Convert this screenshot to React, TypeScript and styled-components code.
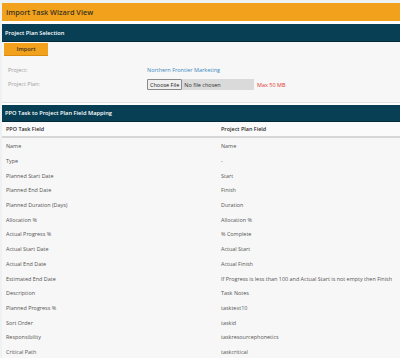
import React from "react";
import styled, { createGlobalStyle } from "styled-components";

const Global = createGlobalStyle`
  html, body { margin: 0; padding: 0; background: #ffffff; }
  body { font-family: "Open Sans", "Noto Sans", sans-serif; }
  * { box-sizing: border-box; }
`;

const Page = styled.div`
  padding: 3px 0 0 2px;
  background: #eef2f2;
  width: 400px;
  height: 358px;
  overflow: hidden;
`;

const Inner = styled.div`
  background: #ffffff;
  display: flex;
  flex-direction: column;
`;

const TitleBar = styled.div`
  height: 18px;
  background: #f2a11c;
  display: flex;
  align-items: center;
  padding-left: 4px;
  font-size: 7.3px;
  font-weight: 600;
  color: #3b3320;
  margin-bottom: 3px;
`;

const Panel = styled.section<{ $gap?: number }>`
  background: #f7f7f7;
  border-bottom: 1px solid #e2e2e2;
  margin-bottom: ${(p) => p.$gap ?? 0}px;
`;

const PanelHeader = styled.div<{ $h: number }>`
  height: ${(p) => p.$h}px;
  background: #083f55;
  border-bottom: 1px solid #052a3a;
  display: flex;
  align-items: center;
  padding-left: 3px;
  font-size: 5.7px;
  font-weight: 600;
  color: #ffffff;
`;

const PanelBody = styled.div`
  padding: 1px 0 12px 2px;
  display: flex;
  flex-direction: column;
`;

const ImportButton = styled.button`
  width: 44px;
  height: 13px;
  background: #f2a11c;
  border: none;
  border-bottom: 1px solid #d98c10;
  font-family: inherit;
  font-size: 5.8px;
  font-weight: 600;
  color: #3b3320;
  padding: 0;
  margin-bottom: 9px;
`;

const FormGrid = styled.div`
  display: grid;
  grid-template-columns: 139px 1fr;
  row-gap: 3px;
  align-items: center;
  padding-left: 4px;
`;

const Label = styled.div`
  font-size: 5.5px;
  color: #a0a0a0;
  height: 11px;
  line-height: 11px;
`;

const LinkValue = styled.a`
  font-size: 5.5px;
  color: #3a87c0;
  text-decoration: none;
  line-height: 11px;
`;

const FileRow = styled.div`
  display: flex;
  align-items: center;
  gap: 3px;
`;

const FileBox = styled.div`
  width: 107px;
  height: 11px;
  background: #dadada;
  display: flex;
  align-items: center;
`;

const ChooseBtn = styled.span`
  height: 11px;
  border: 1px solid #8a8a8a;
  background: #efefef;
  font-size: 5.5px;
  color: #222;
  display: flex;
  align-items: center;
  padding: 0 2px;
  border-radius: 1px;
`;

const NoFile = styled.span`
  font-size: 5.5px;
  color: #333;
  padding-left: 2px;
`;

const MaxSize = styled.span`
  font-size: 5.5px;
  color: #e0362f;
`;

const Table = styled.div`
  display: flex;
  flex-direction: column;
`;

const Row = styled.div<{ $head?: boolean }>`
  display: grid;
  grid-template-columns: 215px 1fr;
  height: ${(p) => (p.$head ? 16 : 14.7)}px;
  align-items: center;
  padding-left: 4px;
  font-size: 5.45px;
  color: ${(p) => (p.$head ? "#2a2a2a" : "#555")};
  font-weight: ${(p) => (p.$head ? 600 : 400)};
  background: ${(p) => (p.$head ? "#fafafa" : "transparent")};
  border-bottom: ${(p) => (p.$head ? "2px solid #d6d6d6" : "none")};
  margin-bottom: ${(p) => (p.$head ? 1 : 0)}px;
  white-space: nowrap;
`;

const rows: [string, string][] = [
  ["Name", "Name"],
  ["Type", "-"],
  ["Planned Start Date", "Start"],
  ["Planned End Date", "Finish"],
  ["Planned Duration (Days)", "Duration"],
  ["Allocation %", "Allocation %"],
  ["Actual Progress %", "% Complete"],
  ["Actual Start Date", "Actual Start"],
  ["Actual End Date", "Actual Finish"],
  ["Estimated End Date", "If Progress is less than 100 and Actual Start is not empty then Finish"],
  ["Description", "Task Notes"],
  ["Planned Progress %", "tasktext10"],
  ["Sort Order", "taskid"],
  ["Responsibility", "taskresourcephonetics"],
  ["Critical Path", "taskcritical"],
];

export default function App() {
  return (
    <>
      <Global />
      <Page>
        <Inner>
          <TitleBar>Import Task Wizard View</TitleBar>
          <Panel $gap={2}>
            <PanelHeader $h={18}>Project Plan Selection</PanelHeader>
            <PanelBody>
              <ImportButton>Import</ImportButton>
              <FormGrid>
                <Label>Project:</Label>
                <LinkValue>Northern Frontier Marketing</LinkValue>
                <Label>Project Plan:</Label>
                <FileRow>
                  <FileBox>
                    <ChooseBtn>Choose File</ChooseBtn>
                    <NoFile>No file chosen</NoFile>
                  </FileBox>
                  <MaxSize>Max 50 MB</MaxSize>
                </FileRow>
              </FormGrid>
            </PanelBody>
          </Panel>
          <Panel>
            <PanelHeader $h={17}>PPO Task to Project Plan Field Mapping</PanelHeader>
            <Table>
              <Row $head>
                <span>PPO Task Field</span>
                <span>Project Plan Field</span>
              </Row>
              {rows.map(([a, b]) => (
                <Row key={a}>
                  <span>{a}</span>
                  <span>{b}</span>
                </Row>
              ))}
            </Table>
          </Panel>
        </Inner>
      </Page>
    </>
  );
}
